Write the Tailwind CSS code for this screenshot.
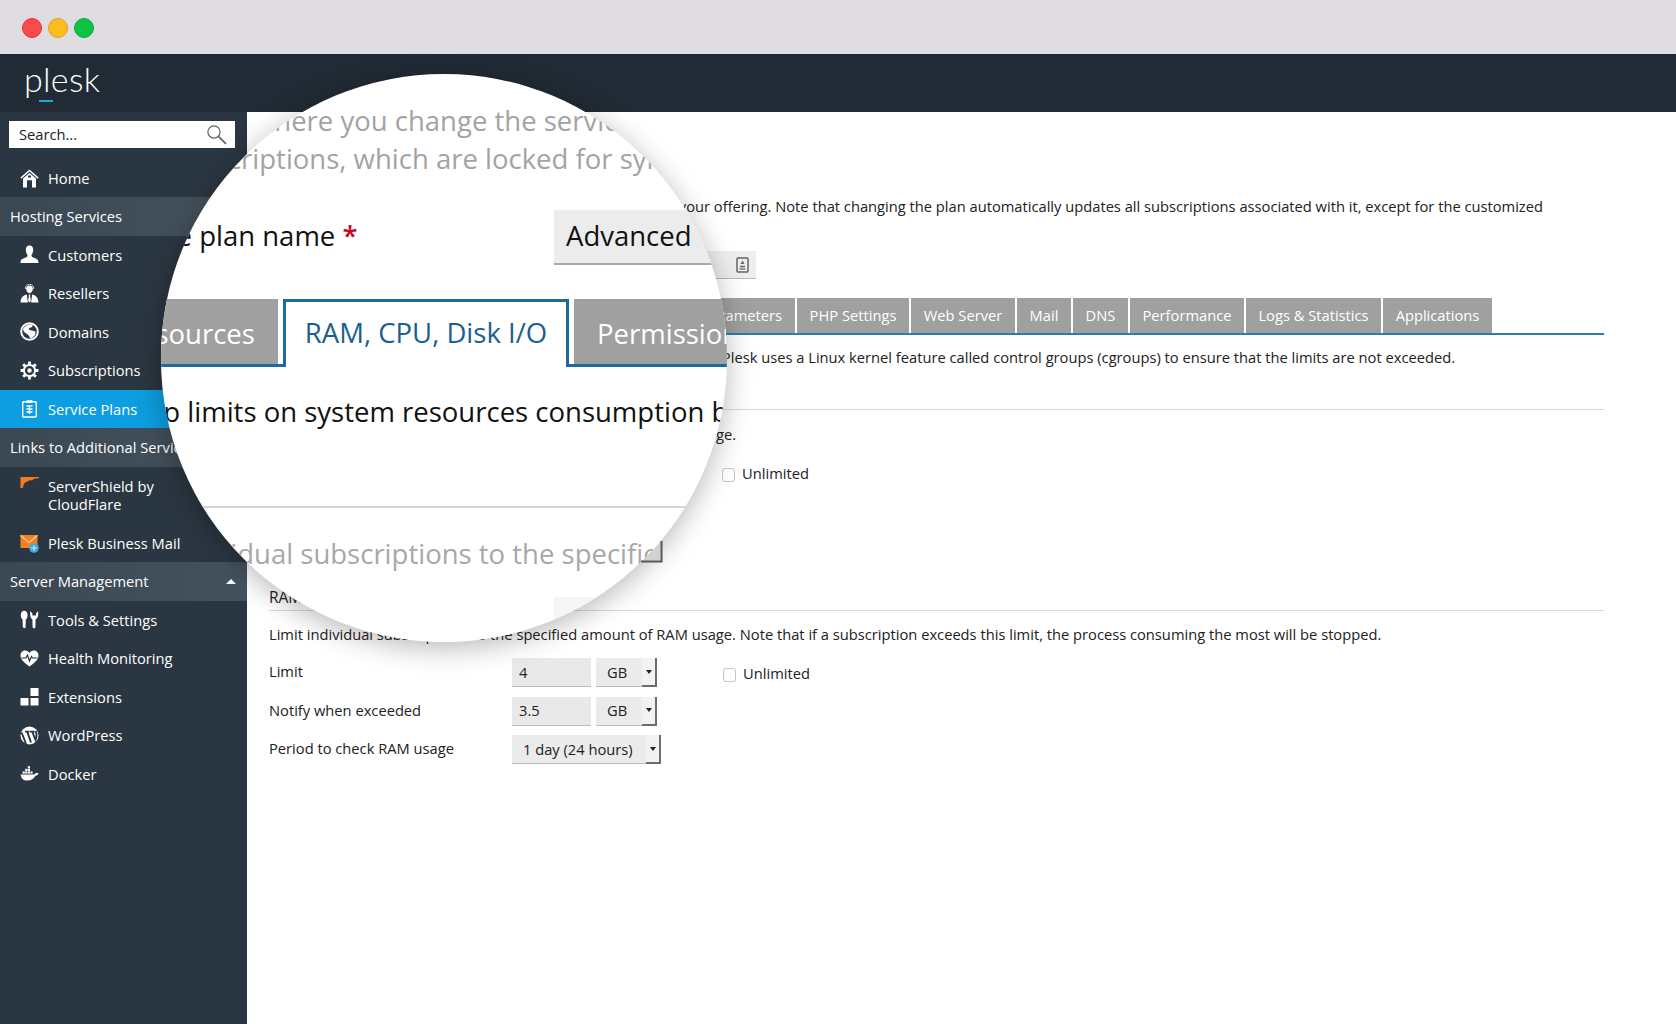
<!DOCTYPE html>
<html lang="en">
<head>
    <meta charset="UTF-8">
    <meta name="viewport" content="width=device-width, initial-scale=1.0">
    <title>Plesk - Service Plans</title>
    <script src="https://cdn.jsdelivr.net/npm/@tailwindcss/browser@4"></script>
</head>
<body class="bg-white font-['Open_Sans',sans-serif] text-[14.7px] text-[#222]">
<div class="relative w-[1676px] h-[1024px] overflow-hidden">
    <!-- window bar -->
    <div class="h-[54px] bg-[#dfdde1] flex items-center gap-[6px] pl-[22px] pt-[2px]">
        <span class="w-5 h-5 rounded-full bg-[#fc4b4b] border border-[#d8343a]"></span>
        <span class="w-5 h-5 rounded-full bg-[#fdbc1e] border border-[#dd9f25]"></span>
        <span class="w-5 h-5 rounded-full bg-[#0fc445] border border-[#10a83c]"></span>
    </div>

    <!-- plesk header -->
    <div class="h-[58px] bg-[#212b35] flex items-center pl-[24px]">
        <span class="relative font-['Lato',sans-serif] font-light text-[34px] leading-none text-white tracking-[0.3px] -mt-[8px]">plesk<span class="absolute left-[15px] top-[38px] w-[14px] h-[2px] bg-[#1ba6dc]"></span></span>
    </div>

    <div class="flex h-[912px]">
        <!-- sidebar -->
        <aside class="w-[247px] shrink-0 bg-[#2a3641] text-white">
            <div class="pt-[9px] pl-[9px] pr-[12px]">
                <div class="h-[27px] bg-white text-[#222] flex items-center justify-between pl-[10px] pr-[8px]">
                    <span>Search...</span>
                    <svg class="w-[21px] h-[21px]" viewBox="0 0 20 20" fill="none" stroke="#666" stroke-width="1.2"><circle cx="7.6" cy="7.6" r="5.8"/><path d="M11.8 11.8 19 19" stroke-width="1.7"/></svg>
                </div>
            </div>
            <div class="h-[49px] pt-[12px] flex items-center pl-[20px] gap-[9px]">
                <svg class="w-[19px] h-[19px] shrink-0" viewBox="0 0 19 19" fill="#fff"><path d="M9.5 0.6 0.4 8.6 1.3 9.7 9.5 2.6 17.7 9.7 18.6 8.6Z"/><path d="M9.5 4 3 9.6V18.4H7V11.2H12V18.4H16V9.6ZM8 6.4H11V8.4H8Z" fill-rule="evenodd"/></svg>
                <span>Home</span>
            </div>
            <div class="h-[38.5px] flex items-center pl-[10px] bg-linear-to-r from-[#3a4853] to-[#44525d]">Hosting Services</div>
            <div class="h-[38.5px] flex items-center pl-[20px] gap-[9px]">
                <svg class="w-[19px] h-[19px] shrink-0" viewBox="0 0 19 19" fill="#fff"><path d="M9.5 0.5C6.8 0.5 5.6 2.6 5.8 5.2 6 7.6 7 9.2 7.5 10 7.6 11.6 6.5 12.3 4.5 13 2.3 13.8 0.5 14.5 0.5 18H18.5C18.5 14.5 16.7 13.8 14.5 13 12.5 12.3 11.4 11.6 11.5 10 12 9.2 13 7.6 13.2 5.2 13.4 2.6 12.2 0.5 9.5 0.5Z"/></svg>
                <span>Customers</span>
            </div>
            <div class="h-[38.5px] flex items-center pl-[20px] gap-[9px]">
                <svg class="w-[19px] h-[19px] shrink-0" viewBox="0 0 19 19" fill="#fff"><path d="M9.5 1.6C7.4 1.6 6.2 3 6.2 4.8 6.2 7.2 7.6 9.2 9.5 9.2 11.4 9.2 12.8 7.2 12.8 4.8 12.8 3 11.6 1.6 9.5 1.6Z"/><path d="M6.8 10.6C4 11.3 1 12.4 0.5 18.5H7.9L6.8 10.6ZM12.2 10.6C15 11.3 18 12.4 18.5 18.5H11.1L12.2 10.6Z"/><path d="M8.5 10.6H10.5L10.1 12 10.9 17 9.5 18.5 8.1 17 8.9 12Z"/><path d="M5.4 5C5.2 1.8 7 0.4 9.5 0.4 12 0.4 13.8 1.8 13.6 5" fill="none" stroke="#fff" stroke-width=".8"/></svg>
                <span>Resellers</span>
            </div>
            <div class="h-[38.5px] flex items-center pl-[20px] gap-[9px]">
                <svg class="w-[19px] h-[19px] shrink-0" viewBox="0 0 19 19"><circle cx="9.5" cy="9.5" r="8.3" fill="none" stroke="#fff" stroke-width="2"/><path d="M3 7C5 3 9 2 12 2.6 13.5 4 12 5.5 10.2 5.8 8.8 6 8.2 7.4 9.8 8 12 8.8 14 8.5 15.4 9.8 16 12.5 13.5 16 10.5 16.5 9 14.5 8.6 12.8 7 12 5.4 11.3 3.4 10 3 7Z" fill="#fff"/></svg>
                <span>Domains</span>
            </div>
            <div class="h-[38.5px] flex items-center pl-[20px] gap-[9px]">
                <svg class="w-[19px] h-[19px] shrink-0" viewBox="0 0 19 19"><circle cx="9.5" cy="9.5" r="5.6" fill="none" stroke="#fff" stroke-width="2"/><circle cx="9.5" cy="9.5" r="2.2" fill="#fff"/><g stroke="#fff" stroke-width="2.8"><path d="M9.5 0.6V3.4M9.5 15.6V18.4M0.6 9.5H3.4M15.6 9.5H18.4M3.2 3.2 5.2 5.2M13.8 13.8 15.8 15.8M3.2 15.8 5.2 13.8M13.8 5.2 15.8 3.2"/></g></svg>
                <span>Subscriptions</span>
            </div>
            <div class="h-[38.5px] flex items-center pl-[20px] gap-[9px] bg-[#0c9ee0]">
                <svg class="w-[19px] h-[19px] shrink-0" viewBox="0 0 19 19" fill="none" stroke="#fff"><rect x="2.7" y="2.8" width="13.6" height="15.2" rx="1" stroke-width="1.4"/><path d="M6.5 1.2H12.5V4H6.5Z" fill="#fff" stroke="none"/><path d="M6.5 7H12.5M6.5 10H12.5M6.5 13H12.5M9.5 6V15" stroke-width="1.3"/></svg>
                <span>Service Plans</span>
            </div>
            <div class="h-[38.5px] flex items-center pl-[10px] bg-linear-to-r from-[#3a4853] to-[#44525d] whitespace-nowrap overflow-hidden">Links to Additional Services</div>
            <div class="h-[57.5px] flex items-start pt-[10px] pl-[20px] gap-[9px]">
                <svg class="w-[19px] h-[19px] shrink-0 -mt-[1px]" viewBox="0 0 19 19" fill="#f47a1f"><path d="M0.5 1H19V2.2C15 2 13.5 2.8 12 4.5 11 4.2 9 4.3 7.6 5.4 5.5 5.6 3.8 6.8 2.8 12H0.5Z"/></svg>
                <span class="leading-[18px]">ServerShield by<br>CloudFlare</span>
            </div>
            <div class="h-[38px] flex items-center pl-[20px] gap-[9px]">
                <svg class="w-[19px] h-[19px] shrink-0" viewBox="0 0 19 19"><path d="M0.5 1H17.5V14H0.5Z" fill="#f58220"/><path d="M0.5 1.4 9 8.5 17.5 1.4" fill="none" stroke="#ffd7a8" stroke-width="1.2"/><circle cx="14" cy="14" r="4.8" fill="#3aa9de"/><path d="M11 14H17M14 11V17" stroke="#d9f0fb" stroke-width="1"/></svg>
                <span>Plesk Business Mail</span>
            </div>
            <div class="h-[38.5px] flex items-center justify-between pl-[10px] pr-[11px] bg-linear-to-r from-[#3a4853] to-[#44525d]">
                <span>Server Management</span>
                <span class="w-0 h-0 border-x-[5px] border-x-transparent border-b-[5px] border-b-white"></span>
            </div>
            <div class="h-[38.5px] flex items-center pl-[20px] gap-[9px]">
                <svg class="w-[19px] h-[19px] shrink-0" viewBox="0 0 19 19" fill="#fff"><path d="M4.2 0.8C6.2 0.8 7.6 2.4 7.6 5 7.6 7.4 6.6 9 5.8 9.6L5.6 17C5.6 18.6 2.8 18.6 2.8 17L2.6 9.6C1.8 9 0.8 7.4 0.8 5 0.8 2.4 2.2 0.8 4.2 0.8Z"/><path d="M10.2 1V5C10.2 7.4 11.4 8.6 12.4 9.2L12.6 17.2C12.6 18.6 15.4 18.6 15.4 17.2L15.6 9.2C16.8 8.6 18.2 7.4 18.2 5V1L16 3.4V5.4H12.4V3.4Z"/></svg>
                <span>Tools &amp; Settings</span>
            </div>
            <div class="h-[38.5px] flex items-center pl-[20px] gap-[9px]">
                <svg class="w-[19px] h-[19px] shrink-0" viewBox="0 0 19 19"><path d="M9.5 17.5C4 13.5 0.5 10.5 0.5 6.5 0.5 3.5 2.6 1.5 5.2 1.5 7 1.5 8.6 2.5 9.5 4 10.4 2.5 12 1.5 13.8 1.5 16.4 1.5 18.5 3.5 18.5 6.5 18.5 10.5 15 13.5 9.5 17.5Z" fill="#fff"/><path d="M1.5 9H6L7.5 6 9.5 12 11.5 7.5 12.5 9H17.5" fill="none" stroke="#2a3641" stroke-width="1.2"/></svg>
                <span>Health Monitoring</span>
            </div>
            <div class="h-[38.5px] flex items-center pl-[20px] gap-[9px]">
                <svg class="w-[19px] h-[19px] shrink-0" viewBox="0 0 19 19" fill="#fff"><rect x="0.5" y="11" width="8" height="7.5"/><rect x="10.5" y="11" width="8" height="7.5"/><rect x="10.5" y="1" width="8" height="8"/></svg>
                <span>Extensions</span>
            </div>
            <div class="h-[38.5px] flex items-center pl-[20px] gap-[9px]">
                <svg class="w-[19px] h-[19px] shrink-0" viewBox="0 0 19 19"><circle cx="9.5" cy="9.5" r="9" fill="#fff"/><path d="M1.6 6.5 6 18 M5.2 5.6H9.2M7.2 5.6 11 16.5M9.8 5.6H14.6M12.3 5.6 15.5 14C17 10.5 16.8 7.5 15.6 5" fill="none" stroke="#2a3641" stroke-width="1.9"/></svg>
                <span>WordPress</span>
            </div>
            <div class="h-[38.5px] flex items-center pl-[20px] gap-[9px]">
                <svg class="w-[19px] h-[19px] shrink-0" viewBox="0 0 19 19" fill="#fff"><path d="M0.6 10.4H14.6C15.2 9.2 16.4 8.8 18.6 9.4 17.8 11 16.6 11.8 15.4 11.8 14 15 11 16.6 7.4 16.6 3.2 16.6 1 14 0.6 10.4Z"/><rect x="2.6" y="7.4" width="2.2" height="2.2"/><rect x="5.2" y="7.4" width="2.2" height="2.2"/><rect x="7.8" y="7.4" width="2.2" height="2.2"/><rect x="10.4" y="7.4" width="2.2" height="2.2"/><rect x="5.2" y="4.8" width="2.2" height="2.2"/><rect x="7.8" y="4.8" width="2.2" height="2.2"/><rect x="7.8" y="2.2" width="2.2" height="2.2"/></svg>
                <span>Docker</span>
            </div>
        </aside>

        <!-- main content -->
        <main class="flex-1 min-w-0 pl-[22px] pr-[72px] pt-[85px]">
            <p class="leading-[18px] whitespace-nowrap text-right pr-[61px]">This is where you change the service plan settings to adjust your offering. Note that changing the plan automatically updates all subscriptions associated with it, except for the customized</p>
            <p class="leading-[18px] whitespace-nowrap">subscriptions, which are locked for sync.</p>

            <div class="flex items-center mt-[18px] h-[28px]">
                <label class="w-[243px]">Service plan name</label>
                <div class="w-[244px] h-[28px] bg-[#eeeeee] border-b border-[#b9b9b9] flex items-center justify-end pr-[7px]">
                    <svg class="w-[13px] h-[16px]" viewBox="0 0 13 16" fill="none" stroke="#666" stroke-width="1.5"><rect x="1" y="1" width="11" height="14" rx="1"/><path d="M4 9.5H9" /><path d="M6.5 3.5 8.5 7H4.5Z" fill="#666" stroke="none"/><path d="M3.5 12H9.5" stroke-width="1.2"/></svg>
                </div>
            </div>

            <div class="flex gap-[2px] mt-[19px] h-[37px] border-b-2 border-[#2f7bab] text-white whitespace-nowrap">
                <div class="w-[112px] bg-[#a0a0a0] flex items-center justify-center">Resources</div>
                <div class="w-[140px] bg-[#a0a0a0] flex items-center justify-center">RAM, CPU, Disk I/O</div>
                <div class="w-[90px] bg-[#a0a0a0] flex items-center justify-center">Permissions</div>
                <div class="w-[178px] bg-[#a0a0a0] flex items-center justify-end pr-[13px]">Hosting Parameters</div>
                <div class="w-[112px] bg-[#a0a0a0] flex items-center justify-center">PHP Settings</div>
                <div class="w-[104px] bg-[#a0a0a0] flex items-center justify-center">Web Server</div>
                <div class="w-[54px] bg-[#a0a0a0] flex items-center justify-center">Mail</div>
                <div class="w-[55px] bg-[#a0a0a0] flex items-center justify-center">DNS</div>
                <div class="w-[114px] bg-[#a0a0a0] flex items-center justify-center">Performance</div>
                <div class="w-[135px] bg-[#a0a0a0] flex items-center justify-center">Logs &amp; Statistics</div>
                <div class="w-[109px] bg-[#a0a0a0] flex items-center justify-center">Applications</div>
            </div>

            <p class="leading-[18px] mt-[13px] whitespace-nowrap text-right pr-[149px]">Plesk uses a Linux kernel feature called control groups (cgroups) to ensure that the limits are not exceeded.</p>

            <div class="border-b border-[#d8d8d8] h-[44px]"></div>

            <div class="relative h-[160px]">
                <p class="absolute left-[447px] top-[15px] leading-[18px]">ge.</p>
                <label class="absolute left-[453px] top-[54px] flex items-center gap-[7px] leading-[18px]">
                    <span class="w-[13px] h-[14px] mt-[3px] rounded-[3px] border border-[#c4c4c4] bg-white"></span>
                    <span>Unlimited</span>
                </label>
            </div>

            <div class="border-b border-[#d8d8d8] h-[41px] pt-[18px] text-[15.5px] leading-[18px]">RAM usage</div>
            <p class="leading-[18px] mt-[14px] whitespace-nowrap">Limit individual subscriptions to the specified amount of RAM usage. Note that if a subscription exceeds this limit, the process consuming the most will be stopped.</p>

            <div class="mt-[15px] flex flex-col gap-[9.5px]">
                <div class="flex items-center h-[29px]">
                    <span class="w-[243px] pb-[2px]">Limit</span>
                    <span class="w-[79px] h-[29px] bg-[#e9e9e9] border-b border-[#bcbcbc] flex items-center pl-[7px]">4</span>
                    <div class="ml-[5px] w-[61px] h-[29px] bg-[#ebebeb] flex items-center relative pl-[11px] border-b border-[#bcbcbc]"><span>GB</span><span class="absolute right-0 top-0 h-[29px] w-[15px] bg-[#f2f2f2] border-r-2 border-b-2 border-[#6d6d6d] flex items-center justify-center"><span class="w-0 h-0 border-x-[3px] border-x-transparent border-t-[4px] border-t-[#222]"></span></span></div>
                    <span class="ml-[66px] w-[13px] h-[14px] mt-[5px] rounded-[3px] border border-[#c4c4c4] bg-white"></span>
                    <span class="ml-[7px] pt-[2px]">Unlimited</span>
                </div>
                <div class="flex items-center h-[29px]">
                    <span class="w-[243px] pb-[2px]">Notify when exceeded</span>
                    <span class="w-[79px] h-[29px] bg-[#e9e9e9] border-b border-[#bcbcbc] flex items-center pl-[7px]">3.5</span>
                    <div class="ml-[5px] w-[61px] h-[29px] bg-[#ebebeb] flex items-center relative pl-[11px] border-b border-[#bcbcbc]"><span>GB</span><span class="absolute right-0 top-0 h-[29px] w-[15px] bg-[#f2f2f2] border-r-2 border-b-2 border-[#6d6d6d] flex items-center justify-center"><span class="w-0 h-0 border-x-[3px] border-x-transparent border-t-[4px] border-t-[#222]"></span></span></div>
                </div>
                <div class="flex items-center h-[29px]">
                    <span class="w-[243px] pb-[2px]">Period to check RAM usage</span>
                    <div class="w-[149px] h-[29px] bg-[#ebebeb] flex items-center relative pl-[11px] border-b border-[#bcbcbc]"><span>1 day (24 hours)</span><span class="absolute right-0 top-0 h-[29px] w-[15px] bg-[#f2f2f2] border-r-2 border-b-2 border-[#6d6d6d] flex items-center justify-center"><span class="w-0 h-0 border-x-[3px] border-x-transparent border-t-[4px] border-t-[#222]"></span></span></div>
                </div>
            </div>
        </main>
    </div>

    <!-- magnifier lens, floats over the page -->
    <div class="absolute left-[161px] top-[74px] w-[566px] h-[568px] rounded-full bg-white shadow-[0_6px_28px_rgba(0,0,0,0.28)] overflow-hidden text-[27.5px] font-medium leading-[38px] whitespace-nowrap">
        <span class="absolute left-[92px] top-[28px] text-[#a3a3a3]">where you change the service plan</span>
        <span class="absolute left-[7px] top-[66px] text-[#a3a3a3]">subscriptions, which are locked for synchronization</span>
        <span class="absolute left-[-60px] top-[143px] text-[#111]">Service plan name <span class="text-[#d0021b] font-semibold">*</span></span>
        <div class="absolute left-[393px] top-[136px] w-[200px] h-[55px] bg-[#ececec] border-b-2 border-[#a9a9a9] pl-[12px] leading-[52px] text-[#111]">Advanced</div>

        <div class="absolute left-[-60px] top-[225px] w-[700px] h-[68px] flex items-end border-b-[3px] border-[#1f6a9b]">
            <div class="w-[177px] h-[65px] bg-[#a0a0a0] text-white leading-[69px] pl-[22px]">Resources</div>
            <div class="ml-[5px] w-[286px] h-[68px] -mb-[3px] bg-white border-[3px] border-b-0 border-[#1f6a9b] text-[#1a5f8e] leading-[62px] text-center">RAM, CPU, Disk I/O</div>
            <div class="ml-[5px] w-[220px] h-[65px] bg-[#a0a0a0] text-white leading-[69px] pl-[23px]">Permissions</div>
        </div>

        <span class="absolute left-[-62px] top-[319px] text-[#111]">Set up limits on system resources consumption by</span>
        <div class="absolute left-0 top-[432px] w-full h-[2px] bg-[#d4d4d4]"></div>
        <span class="absolute left-[8px] top-[461px] text-[#a8a8a8]">individual subscriptions to the specified</span>
        <div class="absolute left-[393px] top-[523px] w-[56px] h-[30px] bg-[#f6f6f6]"></div>
    </div>

    <!-- corner mark that sticks out past the lens -->
    <svg class="absolute left-[640px] top-[540px] w-[23px] h-[24px]" viewBox="0 0 23 24"><path d="M20 3V20H3Z" fill="#d2d2d2"/><path d="M21.5 1V21.5H1" fill="none" stroke="#555" stroke-width="2"/></svg>
</div>
</body>
</html>
